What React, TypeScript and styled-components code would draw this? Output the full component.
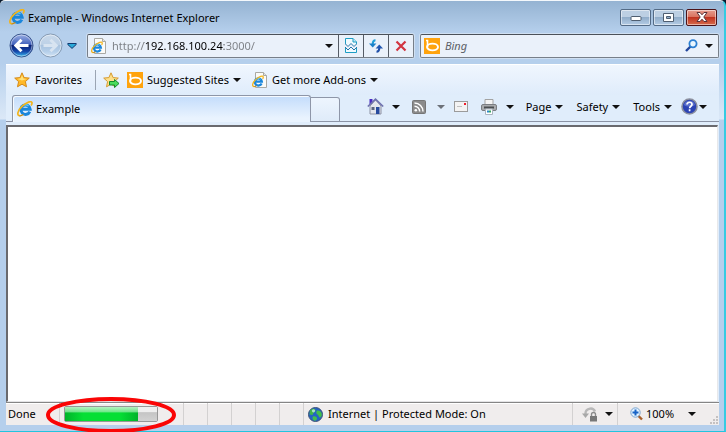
import React from 'react';
import styled, { createGlobalStyle, css } from 'styled-components';

const GlobalStyle = createGlobalStyle`
  *, *::before, *::after { box-sizing: border-box; }
  html, body { margin: 0; }
  body, button, input {
    font-family: "Noto Sans", "Open Sans", sans-serif;
    font-size: 11px;
    line-height: 16px;
    color: #000;
  }
  button { border: 0; padding: 0; background: none; }
  svg { display: block; flex: none; }
`;

const Backdrop = styled.div`
  min-height: 100vh;
  display: flex;
  background: #07182c;
`;

const Window = styled.div`
  flex: 1;
  min-width: 0;
  display: flex;
  flex-direction: column;
  padding: 0 5px 6px 6px;
  border-top: 1px solid #f4f8fc;
  border-right: 2px solid #35cbe2;
  border-bottom: 1px solid #22c4de;
  border-radius: 5px 6px 0 0;
  background: linear-gradient(#95b3d2 0, #b5cfec 31px, #b5cfec 62px, #dbe8f7 118px, #b5cfec 119px, #b5cfec 100%);
`;

const TitleBar = styled.header`
  height: 32px;
  display: flex;
  align-items: center;
  gap: 3px;
  padding: 0 2px 0 3px;
`;

const Title = styled.h1`
  flex: 1;
  margin: 0;
  padding-top: 2px;
  font-size: 11px;
  font-weight: 400;
`;

const Caption = styled.div`
  display: flex;
  gap: 2px;
`;

const CaptionButton = styled.button<{ $close?: boolean }>`
  width: 31px;
  height: 17px;
  display: grid;
  place-items: center;
  border: 1px solid #546b86;
  border-radius: 2px;
  box-shadow: inset 0 0 0 1px #ffffff80;
  background: linear-gradient(#bccfe3 0 48%, #91adca 50%, #b4cce5);
  ${(p) =>
    p.$close &&
    css`
      border-color: #4c1318;
      background: linear-gradient(#e59c8e 0, #d9705d 48%, #c03320 50%, #d66b4c);
    `}
`;

const NavBar = styled.nav`
  height: 31px;
  display: flex;
  align-items: center;
  padding-left: 3px;
  padding-bottom: 6px;
`;

const NavButton = styled.button`
  margin-right: 4px;
  border-radius: 50%;
`;

const Field = styled.form<{ $grow: number }>`
  flex: ${(p) => p.$grow} 1 0;
  min-width: 0;
  height: 24px;
  display: flex;
  align-items: stretch;
  border: 1px solid #777f89;
  border-top-color: #4b5159;
  border-radius: 2px;
  background: #eaf1fa;
  box-shadow: 0 0 0 1px #d0e0f2;
`;

const SearchField = styled(Field)`
  margin-left: 6px;
`;

const FieldIcon = styled.span`
  display: grid;
  place-items: center;
  padding: 0 3px;
`;

const AddressInput = styled.input`
  flex: 1;
  min-width: 0;
  border: 0;
  padding: 0 2px;
  outline: 0;
  background: linear-gradient(90deg, #7b7f84 34px, #000 34px 114px, #7b7f84 114px);
  -webkit-background-clip: text;
  background-clip: text;
  color: transparent;
`;

const SearchInput = styled.input`
  flex: 1;
  min-width: 0;
  border: 0;
  padding: 0 2px;
  outline: 0;
  background: none;
  &::placeholder { color: #5c6066; font-style: italic; opacity: 1; }
`;

const FieldButton = styled.button<{ $divided?: boolean }>`
  width: ${(p) => (p.$divided ? 25 : 18)}px;
  display: grid;
  place-items: center;
  border-left: ${(p) => (p.$divided ? '1px solid #555c66' : '0')};
`;

const Chrome = styled.main`
  flex: 1;
  min-height: 0;
  display: flex;
  flex-direction: column;
  background: #e0edfb;
`;

const FavoritesBar = styled.div`
  height: 31px;
  display: flex;
  align-items: center;
  padding-left: 8px;
  padding-bottom: 1px;
  border-top: 1px solid #fff;
  background: linear-gradient(#f0f6fe, #dfecfb);
`;

const Tool = styled.button<{ $gap?: number; $after?: number }>`
  display: flex;
  align-items: center;
  gap: ${(p) => p.$gap ?? 4}px;
  margin-right: ${(p) => p.$after ?? 0}px;
  white-space: nowrap;
`;

const Divider = styled.span`
  width: 1px;
  height: 20px;
  margin-right: 7px;
  background: #9ba5b3;
`;

const TabRow = styled.div`
  height: 27px;
  display: flex;
  align-items: stretch;
  padding-left: 6px;
  border-bottom: 1px solid #8b93a5;
`;

const Tab = styled.button`
  flex: 0 1 299px;
  height: 27px;
  display: flex;
  align-items: center;
  gap: 3px;
  padding: 0 4px;
  border: 1px solid #8e96a8;
  border-bottom: 0;
  border-radius: 3px 3px 0 0;
  background: linear-gradient(#c3dcfb, #e9f3fe 85%);
  box-shadow: inset 1px 1px 0 #f6faff;
`;

const NewTab = styled.button`
  width: 29px;
  height: 25px;
  margin-top: 2px;
  border: 1px solid #8e96a8;
  border-left: 0;
  border-radius: 0 3px 0 0;
  background: linear-gradient(#edf5fe, #dfebf9);
`;

const Commands = styled.div`
  flex: 1;
  display: flex;
  align-items: center;
  justify-content: flex-end;
  padding-right: 12px;
  padding-bottom: 3px;
`;

const Page = styled.section`
  flex: 1;
  min-height: 100px;
  margin-top: 3px;
  margin-right: 1px;
  border: solid #6a6a6e;
  border-width: 2px 1px 1px 2px;
  border-right-color: #e8e8ea;
  border-bottom-color: #e4e4e6;
  background: #fff;
`;

const StatusBar = styled.footer`
  height: 23px;
  display: flex;
  align-items: stretch;
  border-top: 1px solid #858585;
  box-shadow: inset 0 1px 0 #fff;
  background: #f0eded;
`;

const Cell = styled.div<{ $width?: number; $gap?: number; $pad?: number }>`
  flex: ${(p) => (p.$width ? `0 0 ${p.$width}px` : '1 1 0')};
  display: flex;
  align-items: center;
  gap: ${(p) => p.$gap ?? 4}px;
  padding-left: ${(p) => p.$pad ?? 2}px;
  border-right: 1px solid #d3d1d1;
  white-space: nowrap;
  &:last-child { border-right: 0; }
`;

const ProgressCell = styled(Cell)`
  position: relative;
`;

const Progress = styled.progress`
  appearance: none;
  width: 94px;
  height: 16px;
  border: 1px solid #979797;
  border-radius: 2px;
  &::-webkit-progress-bar {
    background: linear-gradient(#efefef 0 35%, #c5c5c5 40%, #d2d2d2);
  }
  &::-webkit-progress-value {
    background:
      linear-gradient(#c8f5d2e6 0, #8beaa0cc 35%, #ffffff00 42%),
      linear-gradient(90deg, #00b32a, #05df35 25%, #05df35 75%, #00b32a);
  }
`;

const Highlight = styled.svg`
  position: absolute;
  left: -16px;
  top: -6px;
  pointer-events: none;
`;

const Spacer = styled.span`
  flex: 1;
`;

const Grip = styled.svg`
  align-self: flex-end;
`;

const Arrow = ({ color = '#111' }: { color?: string }) => (
  <svg width="8" height="4" viewBox="0 0 8 4" aria-hidden="true">
    <path d="M0 0h8L4 4z" fill={color} />
  </svg>
);

const ExplorerGlyph = () => (
  <>
    <path d="M12.8 10.6A4.700 4.700 0 1 1 13.200 8.300H5" fill="none" stroke="#1a86dc" strokeWidth="3" />
    <path d="M4 7a4.600 4.600 0 0 1 7.500-2" fill="none" stroke="#5cc8f5" strokeWidth="1.300" />
    <path d="M3.200 14.700C-.8 15 .6 9.400 5.200 5.200S14.400-.4 14.900 1.600c.3 1-.2 2.200-.8 3" fill="none" stroke="#f2b41c" strokeWidth="1.700" />
    <path d="M2.600 14.800c1.200.2 2.600-.4 3.800-1.200" fill="none" stroke="#c98b10" strokeWidth="1.200" />
  </>
);

const Explorer = () => (
  <svg width="16" height="16" viewBox="0 0 16 16" aria-hidden="true">
    <ExplorerGlyph />
  </svg>
);

const ExplorerPage = () => (
  <svg width="16" height="16" viewBox="0 0 16 16" aria-hidden="true">
    <path d="M3.500.5h8l3 3v12h-11z" fill="#fbfbf8" stroke="#a9a9a4" />
    <path d="M11.500.5v3h3" fill="#e6e6e0" stroke="#a9a9a4" />
    <g transform="translate(0 3.500) scale(.75)">
      <ExplorerGlyph />
    </g>
  </svg>
);

const Bing = () => (
  <svg width="16" height="16" viewBox="0 0 16 16" aria-hidden="true">
    <path d="M0 0h16v16H0z" fill="#ffa30d" />
    <path d="M2 2.500h1.500v7" fill="none" stroke="#fff" strokeWidth="1.600" />
    <ellipse cx="8.500" cy="9" rx="5.500" ry="3.400" fill="none" stroke="#fff" strokeWidth="1.900" />
  </svg>
);

const starPath = 'M8 .8l2.100 4.800 5.200.5-3.900 3.500 1.100 5.200L8 12.200l-4.500 2.600 1.100-5.200L.7 6.100l5.200-.5z';

const Star = () => (
  <svg width="16" height="16" viewBox="0 0 16 16" aria-hidden="true">
    <path d={starPath} fill="#ffb928" stroke="#d58a1a" />
    <path d="M8 3l1.400 3.400 3.300.5L8 8.500 3.500 7l3.200-.7z" fill="#ffe27c" />
  </svg>
);

const AddStar = () => (
  <svg width="18" height="16" viewBox="0 0 18 16" aria-hidden="true">
    <path d={starPath} fill="#fde08a" stroke="#d69a32" />
    <path d="M6.500 9.500h5V7.500l4.500 4-4.500 4v-2.500h-5z" fill="#4bdd5d" stroke="#138a2d" />
  </svg>
);

const Orb = ({ forward }: { forward?: boolean }) => (
  <svg width="25" height="25" viewBox="0 0 25 25" aria-hidden="true">
    <defs>
      <linearGradient id={forward ? 'orbF' : 'orbB'} x1="0" y1="0" x2="0" y2="1">
        <stop offset="0" stopColor={forward ? '#c9d9ea' : '#9db2e4'} />
        <stop offset=".45" stopColor={forward ? '#bdd1e7' : '#4463bd'} />
        <stop offset=".5" stopColor={forward ? '#a9c3df' : '#0b2377'} />
        <stop offset=".75" stopColor={forward ? '#b4cee9' : '#1545a8'} />
        <stop offset="1" stopColor={forward ? '#d3e4f5' : '#3cc0f4'} />
      </linearGradient>
    </defs>
    <circle cx="12.500" cy="12.500" r="11.500" fill={`url(#${forward ? 'orbF' : 'orbB'})`} stroke={forward ? '#8499b1' : '#38548c'} />
    <circle cx="12.500" cy="12.500" r="10.500" fill="none" stroke="#fff" strokeOpacity=".45" />
    <path
      d={forward ? 'M5.500 12.500H18M12.500 6.800l5.700 5.700-5.700 5.700' : 'M19.500 12.500H7M12.500 6.800l-5.700 5.700 5.700 5.700'}
      fill="none"
      stroke={forward ? '#d8e4f1' : '#fff'}
      strokeWidth="3"
    />
  </svg>
);

const RecentArrow = () => (
  <svg width="10" height="6" viewBox="0 0 10 6" aria-hidden="true">
    <path d="M.8.500h8.400v1L5 5.400.8 1.500z" fill="#29a9d8" stroke="#12396f" />
  </svg>
);

const BrokenPage = () => (
  <svg width="12" height="15" viewBox="0 0 12 15" aria-hidden="true">
    <path d="M.5 14.500V.500H8L11.500 4v10.500z" fill="#f0faff" stroke="#1d9dc4" />
    <path d="M8 .500V4h3.500" fill="#bfeaf6" stroke="#1d9dc4" />
    <path d="M0 5.500l3 3 3-3 3 3 3-3v3.500l-3 3-3-3-3 3-3-3z" fill="#eaf1fa" />
    <path d="M0 5.500l3 3 3-3 3 3 3-3M0 9l3 3 3-3 3 3 3-3" fill="none" stroke="#2474a8" strokeWidth="1" />
  </svg>
);

const Refresh = () => (
  <svg width="14" height="14" viewBox="0 0 14 14" aria-hidden="true">
    <path d="M6.500 1.300C4.300 1.300 3.700 2.500 3.700 5" fill="none" stroke="#21a0d8" strokeWidth="2" />
    <path d="M0 4.500h7.400L3.700 8.500z" fill="#1b80c8" />
    <path d="M7.500 12.700c2.200 0 2.800-1.200 2.800-3.700" fill="none" stroke="#1e4ea8" strokeWidth="2" />
    <path d="M6.600 9.500H14l-3.700-4z" fill="#2257b1" />
  </svg>
);

const Stop = () => (
  <svg width="12" height="12" viewBox="0 0 12 12" aria-hidden="true">
    <path d="M1.500 1.500l9 9M10.500 1.500l-9 9" stroke="#d23440" strokeWidth="2.200" />
  </svg>
);

const Magnifier = () => (
  <svg width="13" height="13" viewBox="0 0 13 13" aria-hidden="true">
    <path d="M1 12l4.500-4.500" stroke="#23479c" strokeWidth="2.400" />
    <circle cx="8" cy="4.800" r="3.600" fill="#e8f6ff" stroke="#2a7fd2" strokeWidth="1.800" />
  </svg>
);

const Home = () => (
  <svg width="17" height="17" viewBox="0 0 17 17" aria-hidden="true">
    <path d="M2.500 1h3v5h-3z" fill="#4a2bc4" />
    <path d="M3 8l5.500-6L14 8v8H3z" fill="#e3e6ee" stroke="#8d92a4" />
    <path d="M.8 8.500l7.700-7.300 7.700 7.300" fill="none" stroke="#6d70ae" strokeWidth="1.600" />
    <path d="M9 9h3.500v7H9z" fill="#264a9e" />
    <path d="M4.500 9h3v3h-3z" fill="#5b6580" />
  </svg>
);

const Feed = () => (
  <svg width="14" height="14" viewBox="0 0 14 14" aria-hidden="true">
    <rect x=".5" y=".5" width="13" height="13" rx="1" fill="#8b8b8b" stroke="#767676" />
    <circle cx="3.800" cy="10.300" r="1.300" fill="#fff" />
    <path d="M2.500 6.300a5.200 5.200 0 0 1 5.200 5.200M2.500 3a8.500 8.500 0 0 1 8.500 8.500" fill="none" stroke="#fff" strokeWidth="1.500" />
  </svg>
);

const Mail = () => (
  <svg width="14" height="11" viewBox="0 0 14 11" aria-hidden="true">
    <rect x=".5" y=".5" width="13" height="10" fill="#f3f3f3" stroke="#9b9b9b" />
    <path d="M10 2h2v2h-2z" fill="#f01c2c" />
    <path d="M3 5.500h5" stroke="#c0c0c0" />
  </svg>
);

const Printer = () => (
  <svg width="16" height="16" viewBox="0 0 16 16" aria-hidden="true">
    <path d="M4 .5h8V6H4z" fill="#f5f5f5" stroke="#a3a3a3" />
    <rect x=".5" y="5.500" width="15" height="6" rx="1.500" fill="#a9abae" stroke="#7b7e82" />
    <path d="M3 8.500h10" stroke="#4b4e51" strokeWidth="2" />
    <path d="M4.500 10h7v5.500h-7z" fill="#fff" stroke="#a9b4bf" />
    <path d="M6 11.500h2v2H6z" fill="#2a88c9" />
    <path d="M8 11.500h2v2H8z" fill="#35a563" />
  </svg>
);

const Help = () => (
  <svg width="17" height="17" viewBox="0 0 17 17" aria-hidden="true">
    <circle cx="8.500" cy="8.500" r="7.500" fill="#2b43b4" stroke="#8b8f9e" strokeWidth="1.600" />
    <path d="M3 7a5.700 5.700 0 0 1 11 0c-3 2-8 2-11 0z" fill="#7d8fdc" opacity=".6" />
    <path d="M6 6.600C6 3.400 11 3.600 11 6.400c0 1.800-2.400 1.900-2.400 3.800M8.600 11.300v1.900" fill="none" stroke="#fff" strokeWidth="1.700" />
  </svg>
);

const Globe = () => (
  <svg width="15" height="15" viewBox="0 0 15 15" aria-hidden="true">
    <circle cx="7.500" cy="7.500" r="7" fill="#2463c4" stroke="#3e5276" />
    <path d="M2 3.500C4 1 7 1.500 7.500 3S5 5.500 5 7s-2 1-3.500.5z" fill="#41b649" />
    <path d="M9 3.500c2-.5 4 .5 4.700 3s-1 4-2 4S11 8 9.500 7.500 8 4.500 9 3.500zM5 9.500c2-.5 4 .5 4 2s-1.500 2.500-3 2S4 10 5 9.500z" fill="#43bf4a" />
    <circle cx="5.500" cy="3.800" r="1.600" fill="#d8f5ff" opacity=".7" />
  </svg>
);

const PrivacyLock = () => (
  <svg width="16" height="15" viewBox="0 0 16 15" aria-hidden="true">
    <path d="M3.500 7A5 5 0 0 1 13 4.500" fill="none" stroke="#b8b8b8" strokeWidth="2.400" />
    <path d="M0 6.500h7L3.500 11z" fill="#a8a8a8" />
    <path d="M9.500 9V7.500a2 2 0 0 1 4 0V9" fill="none" stroke="#8b8b8b" strokeWidth="1.400" />
    <path d="M8 9h7v5.500H8z" fill="#777" />
  </svg>
);

const Zoom = () => (
  <svg width="13" height="14" viewBox="0 0 13 14" aria-hidden="true">
    <path d="M8 8.500l4 4" stroke="#a65f2c" strokeWidth="2.400" />
    <circle cx="5.500" cy="5.500" r="4.700" fill="#e2f2ff" stroke="#7ba5cf" />
    <path d="M5.500 2.500v6M2.500 5.500h6" stroke="#1763c6" strokeWidth="2" />
  </svg>
);

const GripDots = () => (
  <Grip width="10" height="10" viewBox="0 0 10 10" aria-hidden="true">
    <path d="M7 1h2v2H7zM4 4h2v2H4zM7 4h2v2H7zM1 7h2v2H1zM4 7h2v2H4zM7 7h2v2H7z" fill="#c4c1c1" />
  </Grip>
);

const MinimizeGlyph = () => (
  <svg width="12" height="10" viewBox="0 0 12 10" aria-hidden="true">
    <rect x="1" y="4.500" width="10" height="4" rx="1" fill="#fff" stroke="#4f5e70" />
  </svg>
);

const MaximizeGlyph = () => (
  <svg width="11" height="9" viewBox="0 0 11 9" aria-hidden="true">
    <path d="M.5.500h10v8H.5zM3.500 3.500h4v2h-4z" fill="#fff" fillRule="evenodd" stroke="#4f5e70" />
  </svg>
);

const CloseGlyph = () => (
  <svg width="12" height="10" viewBox="0 0 12 10" aria-hidden="true">
    <path d="M1 .5h3l2 2.300L8 .5h3L7.800 5 11 9.500H8L6 7.200 4 9.500H1L4.200 5z" fill="#fff" stroke="#5b3238" />
  </svg>
);

export default function App() {
  return (
    <Backdrop>
      <GlobalStyle />
      <Window>
        <TitleBar>
          <Explorer />
          <Title>Example - Windows Internet Explorer</Title>
          <Caption>
            <CaptionButton aria-label="Minimize"><MinimizeGlyph /></CaptionButton>
            <CaptionButton aria-label="Maximize"><MaximizeGlyph /></CaptionButton>
            <CaptionButton $close aria-label="Close"><CloseGlyph /></CaptionButton>
          </Caption>
        </TitleBar>

        <NavBar>
          <NavButton aria-label="Back"><Orb /></NavButton>
          <NavButton aria-label="Forward"><Orb forward /></NavButton>
          <Tool aria-label="Recent pages" $after={10}><RecentArrow /></Tool>
          <Field $grow={327}>
            <FieldIcon><ExplorerPage /></FieldIcon>
            <AddressInput aria-label="Address" defaultValue="http://192.168.100.24:3000/" />
            <FieldButton type="button" aria-label="Show address history"><Arrow /></FieldButton>
            <FieldButton type="button" $divided aria-label="Compatibility view"><BrokenPage /></FieldButton>
            <FieldButton type="button" $divided aria-label="Refresh"><Refresh /></FieldButton>
            <FieldButton type="button" $divided aria-label="Stop"><Stop /></FieldButton>
          </Field>
          <SearchField $grow={299}>
            <FieldIcon><Bing /></FieldIcon>
            <SearchInput aria-label="Search" placeholder="Bing" />
            <FieldButton type="button" aria-label="Search"><Magnifier /></FieldButton>
            <FieldButton type="button" aria-label="Search options"><Arrow /></FieldButton>
          </SearchField>
        </NavBar>

        <Chrome>
          <FavoritesBar>
            <Tool $gap={5} $after={13}><Star />Favorites</Tool>
            <Divider />
            <Tool aria-label="Add to Favorites Bar" $after={6}><AddStar /></Tool>
            <Tool $after={11}><Bing />Suggested Sites<Arrow /></Tool>
            <Tool><ExplorerPage />Get more Add-ons<Arrow /></Tool>
          </FavoritesBar>

          <TabRow>
            <Tab><Explorer />Example</Tab>
            <NewTab aria-label="New tab" />
            <Commands>
              <Tool aria-label="Home" $gap={8} $after={12}><Home /><Arrow /></Tool>
              <Tool aria-label="Feeds" $gap={11} $after={9}><Feed /><Arrow color="#6c7178" /></Tool>
              <Tool aria-label="Read mail" $after={13}><Mail /></Tool>
              <Tool aria-label="Print" $gap={9} $after={12}><Printer /><Arrow /></Tool>
              <Tool $after={13}>Page<Arrow /></Tool>
              <Tool $after={13}>Safety<Arrow /></Tool>
              <Tool $after={9}>Tools<Arrow /></Tool>
              <Tool aria-label="Help" $gap={1}><Help /><Arrow /></Tool>
            </Commands>
          </TabRow>

          <Page aria-label="Page content" />

          <StatusBar>
            <Cell $width={54}>Done</Cell>
            <ProgressCell $width={124} $pad={4}>
              <Progress aria-label="Loading" max={100} value={79} />
              <Highlight width="132" height="37" viewBox="0 0 132 37" aria-hidden="true">
                <ellipse cx="67" cy="18" rx="63" ry="16" fill="none" stroke="#fa0505" strokeWidth="4" />
              </Highlight>
            </ProgressCell>
            <Cell $width={24} />
            <Cell $width={24} />
            <Cell $width={24} />
            <Cell $width={24} />
            <Cell $width={24} />
            <Cell $gap={5} $pad={4}><Globe />Internet | Protected Mode: On</Cell>
            <Cell $width={45} $gap={7} $pad={9}><PrivacyLock /><Arrow /></Cell>
            <Cell $width={101} $gap={3} $pad={12}>
              <Zoom />100%<Spacer /><Arrow /><Spacer /><GripDots />
            </Cell>
          </StatusBar>
        </Chrome>
      </Window>
    </Backdrop>
  );
}
